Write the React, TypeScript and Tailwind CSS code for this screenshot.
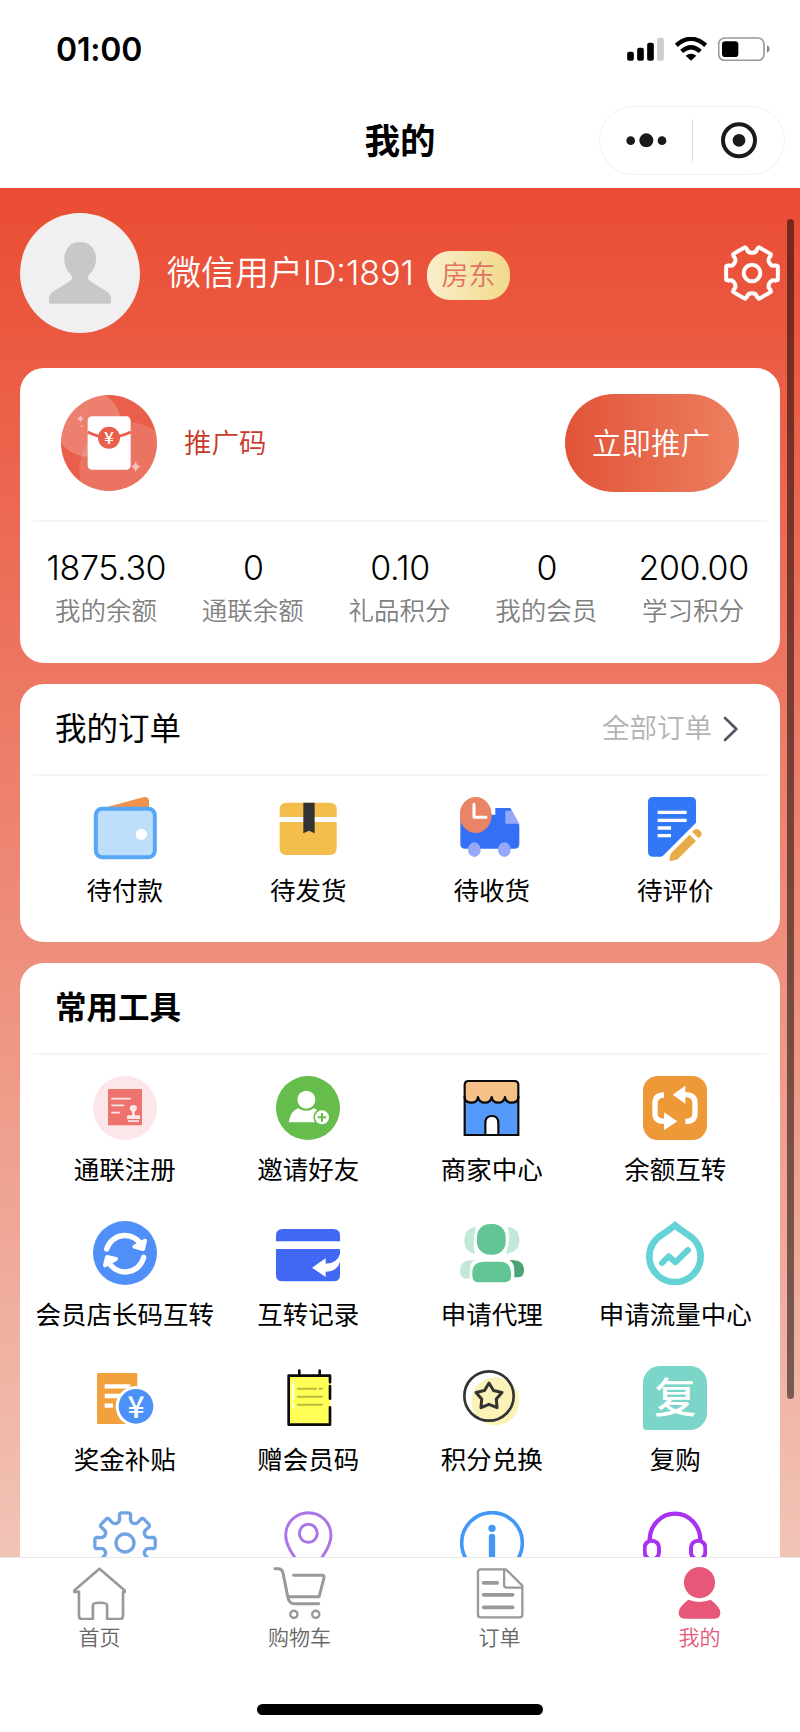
import type { ReactNode } from "react";

const point = (c: number, r: number, deg: number) => {
  const a = (deg * Math.PI) / 180;
  return `${(c + r * Math.cos(a)).toFixed(1)} ${(c + r * Math.sin(a)).toFixed(1)}`;
};

// six flat teeth with round hollows between them
const cogPath = () => {
  let d = "";
  for (let i = 0; i < 6; i++) {
    const a = i * 60;
    d += `${i === 0 ? "M" : "L"}${point(84, 80, a - 15)} Q${point(84, 78, a)} ${point(84, 80, a + 15)}`;
    d += ` L${point(84, 74, a + 18)} C${point(84, 58, a + 17)} ${point(84, 58, a + 43)} ${point(84, 74, a + 42)} `;
  }
  return d + "Z";
};

// eight narrow teeth
const gearPath = () => {
  let d = "";
  for (let i = 0; i < 8; i++) {
    const a = i * 45;
    d += `${i === 0 ? "M" : "L"}${point(96, 80, a - 12)} L${point(96, 88, a - 11)} Q${point(96, 92, a - 9)} ${point(96, 91, a - 6)}`;
    d += ` L${point(96, 91, a + 6)} Q${point(96, 92, a + 9)} ${point(96, 88, a + 11)} L${point(96, 80, a + 12)}`;
    d += ` C${point(96, 60, a + 13)} ${point(96, 60, a + 32)} ${point(96, 80, a + 33)} `;
  }
  return d + "Z";
};

const starPath = () => {
  let d = "";
  for (let i = 0; i < 10; i++) {
    d += `${i === 0 ? "M" : "L"}${point(0, i % 2 === 0 ? 41 : 23, i * 36 - 90)} `;
  }
  return d + "Z";
};

function Icon({ children }: { children: ReactNode }) {
  return (
    <svg viewBox="0 0 192 192" className="w-16 h-16" fill="none">
      {children}
    </svg>
  );
}

const orders = [
  {
    label: "待付款",
    icon: (
      <Icon>
        <path d="M34 32 L150 1 Q168 -3 168 14 V34 Z" fill="#f0924a" />
        <rect x="8.500" y="35.500" width="177" height="145" rx="19" fill="#bddffc" stroke="#55a6f7" strokeWidth="12" />
        <circle cx="145" cy="112" r="17" fill="#fff" />
      </Icon>
    ),
  },
  {
    label: "待发货",
    icon: (
      <Icon>
        <path d="M11 60 V37 Q11 17 31 17 H162 Q182 17 182 37 V60 Z" fill="#f4be4c" />
        <path d="M11 75 H182 V154 Q182 174 162 174 H31 Q11 174 11 154 Z" fill="#f4be4c" />
        <path d="M82 17 H116 V109 L99 101 L82 109 Z" fill="#333" />
      </Icon>
    ),
  },
  {
    label: "待收货",
    icon: (
      <Icon>
        <path d="M1 60 L90 53 H106 V33 H151 L178 84 V140 Q178 155 163 155 H16 Q1 155 1 140 Z" fill="#356ff6" />
        <path d="M136 41 H156 L178 80 H136 Z" fill="#97a7f9" />
        <ellipse cx="47" cy="54" rx="48" ry="54" fill="#ea8467" />
        <path d="M42 22 V61 H78" stroke="#fff" strokeWidth="9" strokeLinecap="round" strokeLinejoin="round" />
        <ellipse cx="43" cy="158" rx="19" ry="22" fill="#97a7f9" />
        <ellipse cx="133" cy="158" rx="19" ry="22" fill="#97a7f9" />
      </Icon>
    ),
  },
  {
    label: "待评价",
    icon: (
      <Icon>
        <path d="M30 0 H144 Q159 0 159 15 V77 L60 176 Q57 179 52 179 H30 Q15 179 15 164 V15 Q15 0 30 0 Z" fill="#3178f6" />
        <path d="M44 46 H131 M44 70 H131 M44 93 H84 M44 116 H84" stroke="#fff" strokeWidth="10" />
        <path d="M79 192 L82 174 Q83 170 87 166 L140 113 L159 132 L107 184 Q104 188 98 189 Z" fill="#e9aa48" />
        <path d="M147 104 L153 99 Q162 92 171 101 Q180 110 173 118 L167 124 Z" fill="#e9aa48" />
      </Icon>
    ),
  },
];

const tools = [
  {
    label: "通联注册",
    icon: (
      <Icon>
        <circle cx="96" cy="96" r="96" fill="#fbe7ea" />
        <rect x="45" y="39" width="102" height="109" rx="2" fill="#ee736e" />
        <path d="M57 68 H112 M57 88 H92 M57 110 H79" stroke="#fbe7ea" strokeWidth="5" strokeLinecap="round" />
        <path d="M117 118 V108 Q110 104 110 97 Q111 87 121 87 Q131 87 132 97 Q132 104 125 108 V118 H137 Q141 118 141 122 V129 H102 V122 Q102 118 106 118 Z M105 133 H138 V138 H105 Z" fill="#fbe7ea" />
      </Icon>
    ),
  },
  {
    label: "邀请好友",
    icon: (
      <Icon>
        <circle cx="96" cy="96" r="96" fill="#66bd4c" />
        <circle cx="91" cy="71" r="27" fill="#fff" />
        <path d="M38 139 Q43 105 66 97 Q91 112 114 97 Q128 100 140 139 Z" fill="#fff" />
        <circle cx="138" cy="124" r="26" fill="#66bd4c" />
        <circle cx="138" cy="124" r="21" fill="#fff" />
        <path d="M138 111 V137 M125 124 H151" stroke="#66bd4c" strokeWidth="6" />
      </Icon>
    ),
  },
  {
    label: "商家中心",
    icon: (
      <Icon>
        <path d="M14 66 H175 V177 H14 Z" fill="#5599fb" />
        <path d="M14 66 V27 Q14 15 26 15 H163 Q175 15 175 27 V66 Q172 80 155 80 Q137 80 135 63 Q132 80 115 80 Q97 80 95 63 Q92 80 75 80 Q57 80 54 63 Q52 80 35 80 Q17 80 14 66 Z" fill="#f6c089" stroke="#0a0a0a" strokeWidth="6.500" strokeLinejoin="round" />
        <path d="M14 60 V177 H175 V60" stroke="#0a0a0a" strokeWidth="6.500" />
        <path d="M76 177 V141 Q76 120 95.500 120 Q115 120 115 141 V177 Z" fill="#fff" stroke="#0a0a0a" strokeWidth="6.500" />
      </Icon>
    ),
  },
  {
    label: "余额互转",
    icon: (
      <Icon>
        <rect width="192" height="192" rx="44" fill="#ee9937" />
        <path d="M63 57 Q36 57 36 82 V114 Q36 136 65 136 M127 136 Q156 136 156 113 V80 Q156 56 126 56" stroke="#fff" strokeWidth="16" />
        <path d="M63 109 L103 136 L63 163 Z M127 29 L89 56 L127 83 Z" fill="#fff" />
      </Icon>
    ),
  },
  {
    label: "会员店长码互转",
    icon: (
      <Icon>
        <circle cx="96" cy="96" r="96" fill="#518ff8" />
        <path d="M41 84 A57 57 0 0 1 148 78 M152 109 A57 57 0 0 1 44 118" stroke="#fff" strokeWidth="16" strokeLinecap="round" />
        <path d="M124 77 L150 84 L156 59 Z M36 133 L42 108 L69 114 Z" fill="#fff" stroke="#fff" strokeWidth="12" strokeLinejoin="round" />
      </Icon>
    ),
  },
  {
    label: "互转记录",
    icon: (
      <Icon>
        <path d="M0 61 V44 Q0 24 20 24 H172 Q192 24 192 44 V61 Z M0 84 H192 V161 Q192 181 172 181 H20 Q0 181 0 161 Z" fill="#4167f5" />
        <path d="M108 140 L149 112 V128 Q184 127 192 98 V122 Q184 152 149 152 V168 Z" fill="#fff" />
      </Icon>
    ),
  },
  {
    label: "申请代理",
    icon: (
      <Icon>
        <path d="M48 18 Q13 22 13 58 Q13 94 44 98 Q36 58 48 18 Z M143 18 Q178 22 178 58 Q178 94 138 98 Q154 58 143 18 Z" fill="#c2e8d8" />
        <path d="M44 117 Q0 114 0 150 Q0 173 20 173 H29 V148 Q29 126 44 117 Z" fill="#c2e8d8" />
        <path d="M148 117 Q192 114 192 148 Q192 169 174 169 H163 V148 Q163 126 148 117 Z" fill="#4ca377" />
        <rect x="51" y="9" width="86" height="92" rx="38" fill="#62c595" />
        <path d="M71 122 H119 Q153 122 153 156 V164 Q153 184 133 184 H57 Q37 184 37 164 V156 Q37 122 71 122 Z" fill="#62c595" />
      </Icon>
    ),
  },
  {
    label: "申请流量中心",
    icon: (
      <Icon>
        <path d="M96 13 Q82 25 60 39 Q19 64 19 106 A77 77 0 0 0 173 106 Q173 64 132 39 Q110 25 96 13 Z" stroke="#63d3d5" strokeWidth="20" />
        <path d="M57 126 L77 106 L97 124 L135 87" stroke="#63d3d5" strokeWidth="18" strokeLinecap="round" strokeLinejoin="round" />
      </Icon>
    ),
  },
  {
    label: "奖金补贴",
    icon: (
      <Icon>
        <rect x="12" y="21" width="121" height="153" rx="3" fill="#f1a23e" />
        <path d="M35 61 H112 M35 90 H90 M35 119 H60" stroke="#fff" strokeWidth="13" />
        <circle cx="129" cy="121" r="61" fill="#fff" />
        <circle cx="129" cy="121" r="52" fill="#4b91f7" />
        <text x="129" y="156" textAnchor="middle" fontSize="90" fill="#fff" className="font-['Noto_Sans_CJK_SC'] font-medium">¥</text>
      </Icon>
    ),
  },
  {
    label: "赠会员码",
    icon: (
      <Icon>
        <rect x="38" y="28" width="125" height="149" fill="#ffff55" />
        <path d="M162 49 V29 H38 V176 H162 V124 M162 60 V98 M70 14 V27 M131 14 V27" stroke="#0a0a0a" strokeWidth="8" strokeLinecap="round" strokeLinejoin="round" />
        <path d="M52 48 V100 M52 112 V127" stroke="#fffff0" strokeWidth="6" strokeLinecap="round" />
        <path d="M65 68 H120 M130 68 H138 M65 92 H138 M65 116 H138" stroke="#b9b93c" strokeWidth="6" strokeLinecap="round" />
      </Icon>
    ),
  },
  {
    label: "积分兑换",
    icon: (
      <Icon>
        <circle cx="106" cy="106" r="72" fill="#fbf2b8" />
        <circle cx="87" cy="90" r="74" stroke="#333" strokeWidth="8" />
        <path d={starPath()} transform="translate(87 92)" stroke="#333" strokeWidth="9" strokeLinejoin="round" />
      </Icon>
    ),
  },
  {
    label: "复购",
    icon: (
      <div className="w-16 h-16 rounded-[17px] rounded-bl-[3px] bg-[#7bd5c8] text-white text-[42px] leading-[64px] text-center font-medium">
        复
      </div>
    ),
  },
  // the last row runs under the tab bar, only its icons show
  {
    icon: (
      <Icon>
        <path d={gearPath()} stroke="#70a3e4" strokeWidth="10" strokeLinejoin="round" />
        <circle cx="96" cy="96" r="27" stroke="#70a3e4" strokeWidth="10" />
      </Icon>
    ),
  },
  {
    icon: (
      <Icon>
        <path d="M97 5 A68 68 0 0 0 29 73 Q29 118 97 186 Q165 118 165 73 A68 68 0 0 0 97 5 Z" stroke="#ab74e8" strokeWidth="9" />
        <circle cx="97" cy="67" r="27" stroke="#ab74e8" strokeWidth="9" />
      </Icon>
    ),
  },
  {
    icon: (
      <Icon>
        <circle cx="96" cy="96" r="91" stroke="#4398f7" strokeWidth="11" />
        <circle cx="96" cy="52" r="11" fill="#4398f7" />
        <path d="M96 78 V145" stroke="#4398f7" strokeWidth="19" strokeLinecap="round" />
      </Icon>
    ),
  },
  {
    icon: (
      <Icon>
        <path d="M20 88 A76 80 0 0 1 172 88" stroke="#a832ef" strokeWidth="13" />
        <rect x="5" y="89" width="43" height="56" rx="21" stroke="#a832ef" strokeWidth="12" />
        <rect x="144" y="89" width="43" height="56" rx="21" stroke="#a832ef" strokeWidth="12" />
      </Icon>
    ),
  },
];

const stats = [
  { value: "1875.30", label: "我的余额" },
  { value: "0", label: "通联余额" },
  { value: "0.10", label: "礼品积分" },
  { value: "0", label: "我的会员" },
  { value: "200.00", label: "学习积分" },
];

const tabs = [
  {
    label: "首页",
    active: false,
    icon: (
      <path d="M80 5 L3 72 V75 H18 V148 Q18 157 27 157 H60 V116 Q60 108 81 108 Q103 108 103 116 V157 H142 Q151 157 151 148 V75 H157 V72 Z" stroke="#999" strokeWidth="8" strokeLinejoin="round" />
    ),
  },
  {
    label: "购物车",
    active: false,
    icon: (
      <g stroke="#999" strokeWidth="9" strokeLinecap="round" strokeLinejoin="round">
        <path d="M6 5 H16 Q27 5 30 17 L45 92 Q49 111 64 111 H138" />
        <path d="M62 25 H147 Q156 25 154 33 L139 90 H46" />
        <circle cx="63" cy="143" r="11" strokeWidth="7" />
        <circle cx="129" cy="143" r="11" strokeWidth="7" />
      </g>
    ),
  },
  {
    label: "订单",
    active: false,
    icon: (
      <g stroke="#999" strokeWidth="7" strokeLinejoin="round">
        <path d="M99 7 H23 Q15 7 15 15 V144 Q15 152 23 152 H141 Q149 152 149 144 V56 Z" />
        <path d="M94 7 V54 Q94 62 102 62 H149" />
        <path d="M32 48 H73 M32 84 H120 M32 122 H120" strokeWidth="11" strokeLinecap="round" />
      </g>
    ),
  },
  {
    label: "我的",
    active: true,
    icon: (
      <g fill="#e65778">
        <circle cx="80" cy="47" r="47" />
        <path d="M46 99 Q80 112 114 99 Q143 122 143 138 Q143 156 125 156 H36 Q17 156 17 138 Q17 122 46 99 Z" />
      </g>
    ),
  },
];

function Item({ label, icon }: { label?: string; icon: ReactNode }) {
  return (
    <div className="flex flex-col items-center h-[145px]">
      {icon}
      {label && <span className="mt-[11px] text-[25.500px] leading-[38px] whitespace-nowrap">{label}</span>}
    </div>
  );
}

export default function App() {
  return (
    <div className="relative w-[800px] h-[1732px] overflow-hidden flex flex-col bg-white text-black font-['Inter','Noto_Sans_CJK_SC',sans-serif]">
      <header className="h-[188px] shrink-0">
        <div className="h-[98px] pl-[56px] pr-[30px] flex items-center justify-between">
          <span className="mt-[2px] text-[32px] leading-none font-semibold tracking-[-0.2px]">01:00</span>
          <div className="flex items-center gap-[11px]">
            <svg viewBox="0 0 110 72" className="w-[37px] h-6">
              <rect x="0" y="44" width="20" height="27" rx="6" />
              <rect x="30" y="32" width="20" height="39" rx="6" />
              <rect x="60" y="17" width="20" height="54" rx="6" />
              <rect x="90" y="2" width="20" height="69" rx="6" fill="#ccc" />
            </svg>
            <svg viewBox="0 0 96 72" className="w-8 h-6" fill="none" stroke="#000" strokeWidth="13">
              <path d="M4 25 Q48 -14 92 25" />
              <path d="M20 43 Q48 18 76 43" />
              <path d="M32 56 Q48 44 64 56 L48 71 Z" fill="#000" stroke="none" />
            </svg>
            <svg viewBox="0 0 156 72" className="w-[52px] h-6">
              <rect x="2" y="3" width="136" height="67" rx="18" fill="none" stroke="#999" strokeWidth="5" />
              <rect x="12" y="13" width="49" height="47" rx="10" />
              <path d="M147 24 Q155 28 155 36 Q155 44 147 48 Z" fill="#888" />
            </svg>
          </div>
        </div>
        <div className="grid grid-cols-[1fr_auto_1fr] items-start pt-2 px-[15px]">
          <div />
          <h1 className="text-[35.500px] leading-[71px] font-semibold">我的</h1>
          <div className="justify-self-end w-[186px] h-[69px] rounded-full border border-[#f0f0f0]">
            <svg viewBox="0 0 552 201" className="w-full h-full">
              <circle cx="92" cy="101" r="13" fill="#1a1a1a" />
              <circle cx="139" cy="100" r="21" fill="#1a1a1a" />
              <circle cx="186" cy="101" r="13" fill="#1a1a1a" />
              <path d="M278 38 V166" stroke="#ddd" strokeWidth="3" />
              <circle cx="417" cy="100" r="48" fill="none" stroke="#1a1a1a" strokeWidth="12" />
              <circle cx="417" cy="100" r="19" fill="#1a1a1a" />
            </svg>
          </div>
        </div>
      </header>

      <main className="relative h-[1369px] shrink-0 overflow-hidden px-5 bg-linear-to-b/srgb from-[#ea4c33] to-[#f1c4b6]">
        <div className="h-[179.500px] pt-[25px] flex">
          <svg viewBox="0 0 360 360" className="w-[120px] h-[120px]">
            <circle cx="180" cy="180" r="180" fill="#f0f0f0" />
            <path d="M180 87 C150 87 133 109 133 137 C133 158 141 172 151 183 Q162 196 150 205 Q130 217 98 237 Q87 244 87 256 V266 Q87 272 93 272 H267 Q273 272 273 266 V256 Q273 244 262 237 Q230 217 210 205 Q198 196 209 183 C219 172 228 158 228 137 C228 109 210 87 180 87 Z" fill="#c8c8c8" />
          </svg>
          <div className="h-[120px] ml-[27px] flex flex-1 items-center">
            <span className="text-[34px] leading-[50px] font-[350] text-white">微信用户ID:1891</span>
            <span className="ml-[13px] mt-[5px] w-[83px] h-[49px] rounded-[23px] text-[27px] leading-[49px] text-center font-[350] text-[#e07262] bg-linear-to-r/srgb from-[#faefcd] to-[#f1da8a]">
              房东
            </span>
            <svg viewBox="0 0 168 168" className="ml-auto w-14 h-14" fill="none" stroke="#fff" strokeWidth="12" strokeLinejoin="round">
              <path d={cogPath()} />
              <circle cx="84" cy="84" r="25" />
            </svg>
          </div>
        </div>

        <section className="h-[295.500px] px-[13px] rounded-[24px] bg-white">
          <div className="h-[154.500px] px-7 pt-[26.500px] flex border-b-2 border-[#f5f5f5]">
            <svg viewBox="0 0 288 288" className="w-24 h-24 mt-px">
              <defs>
                <clipPath id="coin">
                  <circle cx="144" cy="144" r="144" />
                </clipPath>
              </defs>
              <g clipPath="url(#coin)">
                <rect width="288" height="288" fill="#e95f4b" />
                <circle cx="81" cy="86" r="99" fill="#fff" fillOpacity="0.200" />
                <circle cx="198" cy="224" r="143" fill="#fff" fillOpacity="0.130" />
              </g>
              <rect x="80" y="64" width="129" height="160" rx="13" fill="#fff" />
              <path d="M80 111 Q144 143 209 111" fill="none" stroke="#e95f4b" strokeWidth="9" />
              <circle cx="144" cy="128" r="33" fill="#e95f4b" />
              <text x="144" y="147" textAnchor="middle" fontSize="52" fill="#fff" className="font-['Noto_Sans_CJK_SC'] font-medium">¥</text>
              <path d="M58 59 Q60 69 69 71 Q60 73 58 83 Q56 73 47 71 Q56 69 58 59 Z M224 199 Q227 212 239 215 Q227 218 224 231 Q221 218 210 215 Q221 212 224 199 Z" fill="#f7c3bd" />
              <circle cx="62" cy="94" r="3" fill="#f7c3bd" />
            </svg>
            <span className="ml-[27px] mt-1 text-[27.500px] leading-[90px] font-[350] text-[#c8392b]">推广码</span>
            <button className="ml-auto w-[174px] h-[98px] pr-[2px] rounded-full text-[29.500px] font-[350] text-white bg-linear-to-r/srgb from-[#e15338] to-[#ed8060]">
              立即推广
            </button>
          </div>
          <div className="pt-[21px] grid grid-cols-5 text-center">
            {stats.map((s) => (
              <div key={s.label}>
                <div className="text-[34px] leading-[50px] font-[350] tracking-[-0.4px]">{s.value}</div>
                <div className="pr-px text-[25.500px] leading-[35px] font-[350] text-[#808080]">{s.label}</div>
              </div>
            ))}
          </div>
        </section>

        <section className="mt-[21px] h-[258px] px-[13px] rounded-[24px] bg-white">
          <div className="h-[92px] pl-[22px] pr-[28px] flex items-center justify-between border-b-2 border-[#f5f5f5]">
            <h2 className="text-[31.500px] leading-[46px]">我的订单</h2>
            <div className="flex items-center gap-[11px] text-[27.500px] font-[350] text-[#b2b2b2]">
              全部订单
              <svg viewBox="0 0 48 78" className="w-4 h-[26px]" fill="none" stroke="#555562" strokeWidth="8" strokeLinecap="round" strokeLinejoin="round">
                <path d="M6 6 L40 39 L6 72" />
              </svg>
            </div>
          </div>
          <div className="pt-[21px] grid grid-cols-4">
            {orders.map((o) => (
              <Item key={o.label} label={o.label} icon={o.icon} />
            ))}
          </div>
        </section>

        <section className="mt-[21px] h-[800px] px-[13px] rounded-[24px] bg-white">
          <div className="h-[92px] pl-[22px] flex items-center border-b-2 border-[#f5f5f5]">
            <h2 className="text-[31.500px] leading-[46px] font-semibold">常用工具</h2>
          </div>
          <div className="pt-[21px] grid grid-cols-4">
            {tools.map((t, i) => (
              <Item key={i} label={t.label} icon={t.icon} />
            ))}
          </div>
        </section>

        <div className="absolute right-[6px] top-[31px] w-[7px] h-[1180px] rounded-full bg-black/50" />
      </main>

      <nav className="h-[147px] shrink-0 border-t border-[#e8e8e8] grid grid-cols-4">
        {tabs.map((t) => (
          <div key={t.label} className="pt-[9px] pr-px flex flex-col items-center">
            <svg viewBox="0 0 160 160" className="w-[53px] h-[53px]" fill="none">
              {t.icon}
            </svg>
            <span className={t.active ? "mt-px text-[21px] leading-[33px] font-[350] text-[#e65778]" : "mt-px text-[21px] leading-[33px] font-[350] text-[#666]"}>
              {t.label}
            </span>
          </div>
        ))}
      </nav>
      <div className="mx-auto w-[286px] h-[11px] rounded-full bg-black" />
    </div>
  );
}
